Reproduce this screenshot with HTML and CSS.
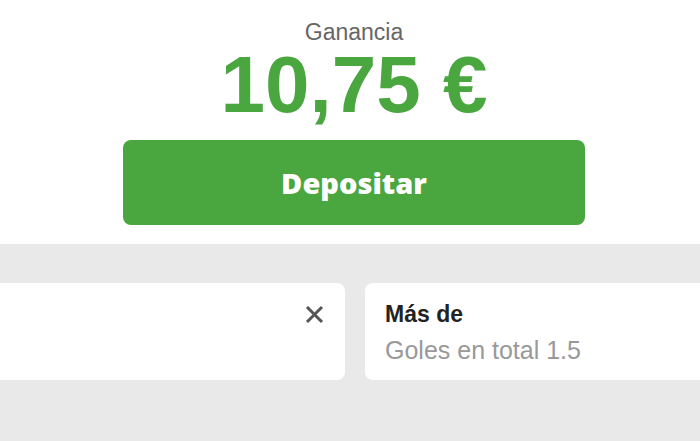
FILE: index.html
```html
<!DOCTYPE html>
<html lang="es">
<head>
  <meta charset="UTF-8">
  <title>Ganancia</title>
  <link rel="stylesheet" href="styles.css">
</head>
<body>
  <div class="summary">
    <div class="summary-inner">
      <div class="label">Ganancia</div>
      <div class="amount">10,75 €</div>
      <button class="deposit">Depositar</button>
    </div>
  </div>

  <div class="bets">
    <div class="bet-card">
      <div class="bet-info"></div>
      <button class="close" aria-label="Cerrar">
        <svg width="19" height="19" viewBox="0 0 19 19">
          <path d="M2 2 L17 17 M17 2 L2 17" stroke="#555" stroke-width="3" fill="none"/>
        </svg>
      </button>
    </div>
    <div class="bet-card">
      <div class="bet-info">
        <div class="bet-title">Más de</div>
        <div class="bet-sub">Goles en total 1.5</div>
      </div>
    </div>
  </div>
</body>
</html>
```

FILE: styles.css
```css
body {
  margin: 0;
  font-family: "Liberation Sans", Arial, sans-serif;
  background: #e9e9e9;
  overflow: hidden;
}

.summary {
  background: #fff;
  padding: 19px 0 19px;
}

.summary-inner {
  width: 462px;
  margin-left: 123px;
  text-align: center;
}

.label {
  font-size: 23px;
  line-height: 26px;
  color: #666;
}

.amount {
  font-size: 80px;
  line-height: 80px;
  font-weight: bold;
  color: #4aa63f;
}

.deposit {
  display: block;
  width: 100%;
  height: 85px;
  margin-top: 15px;
  border: none;
  border-radius: 8px;
  background: #4aa63e;
  color: #fff;
  font-family: "Open Sans", sans-serif;
  font-weight: 800;
  font-size: 29px;
  cursor: pointer;
}

.bets {
  display: flex;
  gap: 20px;
  padding-top: 39px;
  margin-left: -115px;
}

.bet-card {
  flex: 0 0 460px;
  height: 97px;
  box-sizing: border-box;
  background: #fff;
  border-radius: 8px;
  padding: 18px 21px 0 20px;
  display: flex;
  justify-content: space-between;
  align-items: flex-start;
}

.bet-title {
  font-size: 23px;
  line-height: 26px;
  font-weight: bold;
  color: #222;
}

.bet-sub {
  margin-top: 9px;
  font-size: 25px;
  line-height: 28px;
  color: #999;
}

.close {
  border: none;
  background: none;
  padding: 0;
  margin-top: 4px;
  width: 19px;
  height: 19px;
  cursor: pointer;
}

.close svg {
  display: block;
}
```
